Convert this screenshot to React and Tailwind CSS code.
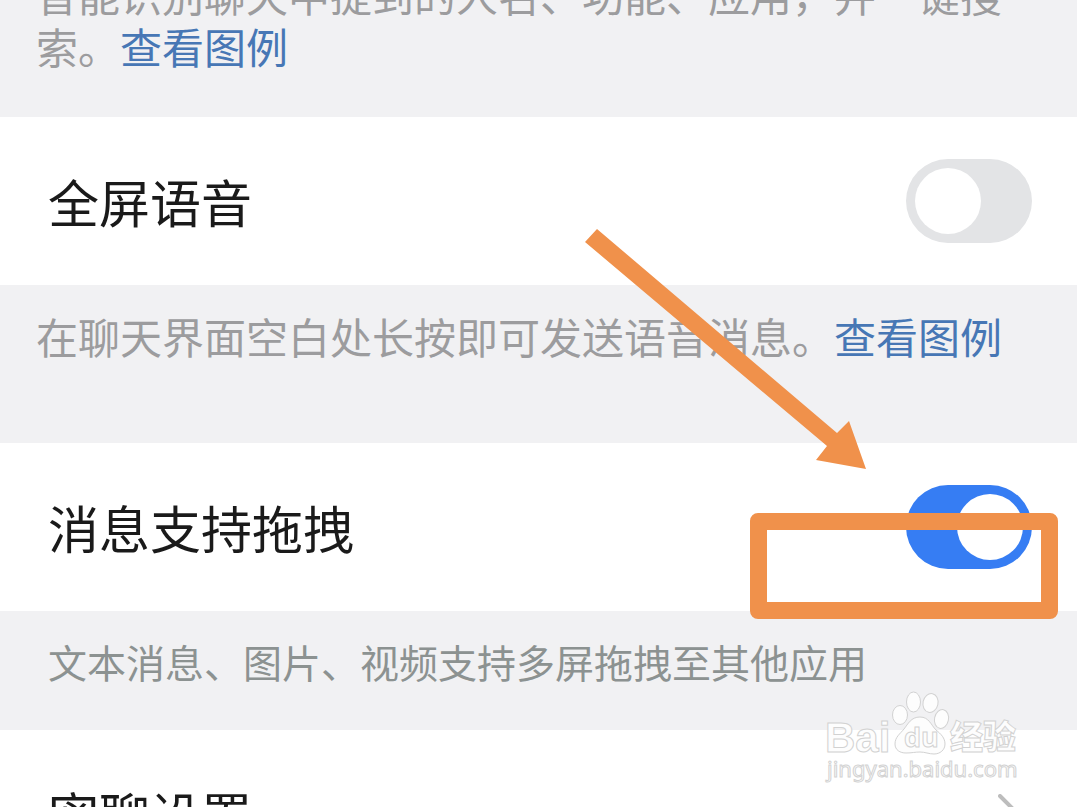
import { useState } from "react";

const Note = ({ children, className = "" }) => (
  <p className={`px-9 text-[42px] leading-[52px] text-[#9c9c9e] ${className}`}>
    {children}
  </p>
);

const ExampleLink = () => (
  <a href="#example" className="text-[#4777b5]">
    查看图例
  </a>
);

const SwitchRow = ({ id, label, checked, onChange, children }) => (
  <div className="relative flex h-[168px] items-center justify-between bg-white pl-12 pr-[45px]">
    <label htmlFor={id} className="text-[51px] leading-[60px] text-[#1a1a1a]">
      {label}
    </label>
    <input
      id={id}
      type="checkbox"
      role="switch"
      checked={checked}
      onChange={(e) => onChange(e.target.checked)}
      className="h-[84px] w-[126px] shrink-0 cursor-pointer appearance-none rounded-full bg-[#e3e4e6] p-[9px] before:block before:size-[66px] before:rounded-full before:bg-white checked:bg-[#367df3] checked:before:ml-[42px]"
    />
    {children}
  </div>
);

// orange arrow and frame that point at the drag switch
const Callout = () => (
  <>
    <svg
      className="pointer-events-none absolute -top-[215px] right-[211px]"
      width="282"
      height="242"
      viewBox="0 0 282 242"
      aria-hidden="true"
    >
      <polygon
        points="13,1 253,205 265,193 282,241 232,232 243,218 1,14"
        fill="#f0914b"
      />
    </svg>
    <div className="pointer-events-none absolute right-[19px] top-[70px] h-[106px] w-[308px] rounded-lg border-[17px] border-[#f0914b]" />
  </>
);

const Watermark = () => (
  <svg
    className="pointer-events-none absolute bottom-4 right-[53px]"
    width="204"
    height="106"
    viewBox="0 0 204 106"
    fill="#fdfdfd"
    stroke="#d2d2d2"
    strokeWidth="1"
  >
    <text x="5" y="67" fontSize="42" fontWeight="700" fontFamily="'Liberation Sans', sans-serif">
      Bai
    </text>
    <ellipse cx="80" cy="30" rx="7.5" ry="9.5" />
    <ellipse cx="93.500" cy="17" rx="7" ry="10" />
    <ellipse cx="110.500" cy="18" rx="7.5" ry="9.5" transform="rotate(12 110.500 18)" />
    <ellipse cx="121.500" cy="34" rx="7" ry="9.5" transform="rotate(12 121.500 34)" />
    <path d="M100 32c-9 0-12 7-16 12-4 5-9 8-9 15 0 6 5 9 11 9 6 0 9-1 14-1s9 2 14 2c6 0 11-4 11-10 0-6-4-10-9-14-5-5-7-13-16-13z" />
    <text x="84" y="62" fontSize="27" fontWeight="700" fontFamily="'Open Sans', sans-serif">
      du
    </text>
    <text x="130" y="64" fontSize="33" fontWeight="900" fontFamily="'Noto Sans CJK SC', sans-serif">
      经验
    </text>
    <text x="7" y="92" fontSize="22" fontFamily="'Noto Sans', sans-serif">
      jingyan.baidu.com
    </text>
  </svg>
);

export default function App() {
  const [voice, setVoice] = useState(false);
  const [drag, setDrag] = useState(true);

  return (
    <main
      lang="zh-CN"
      className="relative h-screen overflow-hidden bg-[#f1f1f3] font-['Noto_Sans_CJK_SC',sans-serif]"
    >
      {/* the list is scrolled a little past its first line */}
      <div className="-mt-8">
        <Note className="pb-[45px]">
          智能识别聊天中提到的人名、功能、应用，并一键搜索。
          <ExampleLink />
        </Note>

        <SwitchRow id="voice" label="全屏语音" checked={voice} onChange={setVoice} />
        <Note className="pb-[81px] pt-[25px]">
          在聊天界面空白处长按即可发送语音消息。
          <ExampleLink />
        </Note>

        <SwitchRow id="drag" label="消息支持拖拽" checked={drag} onChange={setDrag}>
          <Callout />
        </SwitchRow>
        <p className="px-12 pb-[43px] pt-6 text-[39px] leading-[52px] text-[#8c9291]">
          文本消息、图片、视频支持多屏拖拽至其他应用
        </p>

        <a
          href="#secret"
          className="flex h-[168px] items-center justify-between bg-white pl-12 pr-[57px] text-[51px] leading-[60px] text-[#1a1a1a]"
        >
          密聊设置
          <svg
            width="22"
            height="40"
            viewBox="0 0 22 40"
            fill="none"
            stroke="#bdbdbd"
            strokeWidth="4"
            strokeLinecap="round"
            aria-hidden="true"
          >
            <path d="M2 2l18 18L2 38" />
          </svg>
        </a>
      </div>
      <Watermark />
    </main>
  );
}
